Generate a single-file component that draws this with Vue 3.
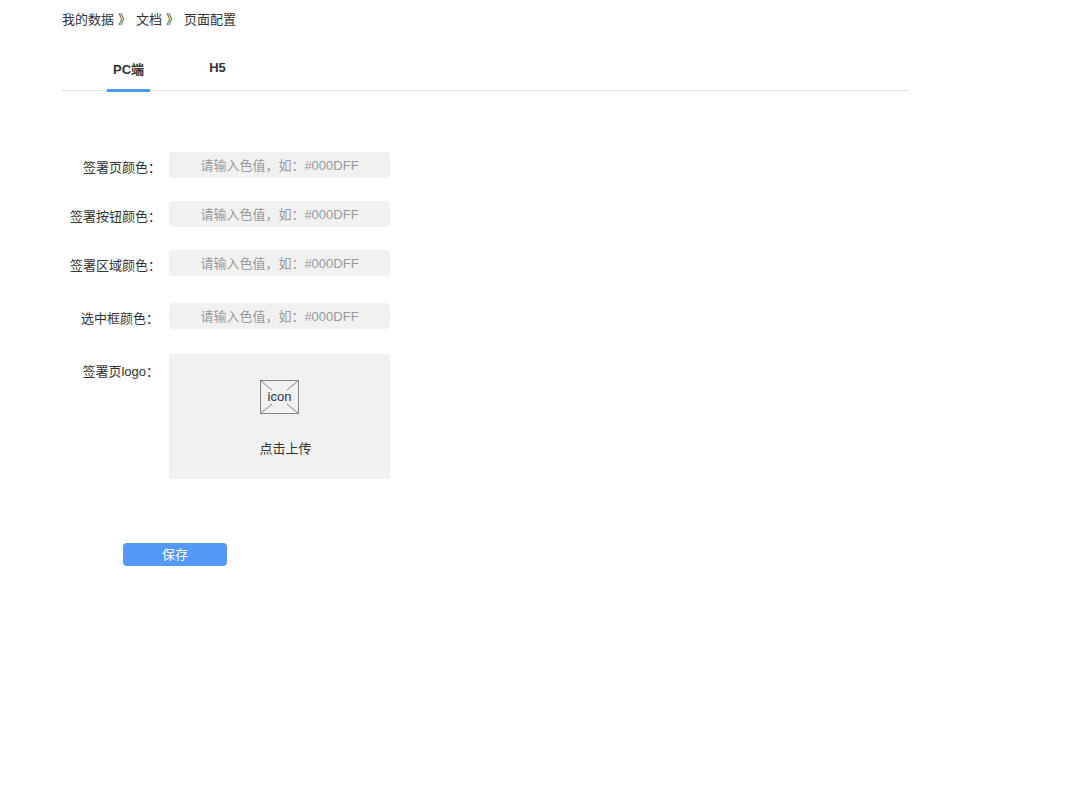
<script setup>
import { ref, reactive } from 'vue'

const tabs = [
  { id: 'pc', text: 'PC端' },
  { id: 'h5', text: 'H5' },
]
const active = ref('pc')

const crumbs = ['我的数据', '文档']
const hint = '请输入色值，如：#000DFF'

const pageFields = [
  { id: 'page-color', text: '签署页颜色：' },
  { id: 'button-color', text: '签署按钮颜色：' },
  { id: 'area-color', text: '签署区域颜色：' },
]
const boxFields = [{ id: 'selected-color', text: '选中框颜色：' }]

const values = reactive({
  'page-color': '',
  'button-color': '',
  'area-color': '',
  'selected-color': '',
})
</script>

<template>
  <div class="page" lang="zh-CN">
    <nav class="crumbs" aria-label="页面路径">
      <template v-for="c in crumbs" :key="c">
        <a href="#">{{ c }}</a>
        <span class="sep">》</span>
      </template>
      <span>页面配置</span>
    </nav>

    <div class="tabs" role="tablist">
      <button
        v-for="t in tabs"
        :key="t.id"
        type="button"
        role="tab"
        class="tab"
        :class="{ active: active === t.id }"
        :aria-selected="active === t.id"
        @click="active = t.id"
      >
        {{ t.text }}
      </button>
    </div>

    <form class="form" @submit.prevent>
      <div class="group">
        <div v-for="f in pageFields" :key="f.id" class="row">
          <label class="name" :for="f.id">{{ f.text }}</label>
          <input :id="f.id" v-model="values[f.id]" class="field" type="text" :placeholder="hint" />
        </div>
      </div>

      <div class="group extra">
        <div v-for="f in boxFields" :key="f.id" class="row">
          <label class="name" :for="f.id">{{ f.text }}</label>
          <input :id="f.id" v-model="values[f.id]" class="field" type="text" :placeholder="hint" />
        </div>
        <div class="row logo">
          <label class="name" for="logo-file">签署页logo：</label>
          <label class="upload">
            <input id="logo-file" class="file" type="file" accept="image/*" />
            <span class="icon">
              <svg width="40" height="34" viewBox="0 0 40 34" fill="none" stroke="#858585" aria-hidden="true">
                <rect x="0.5" y="0.5" width="38" height="33" />
                <path d="M0.5 0.5L12 10M38.5 0.5L27 10M0.5 33.5L12 24M38.5 33.5L27 24" />
              </svg>
              <span class="icon-text">icon</span>
            </span>
            <span class="upload-text">点击上传</span>
          </label>
        </div>
      </div>

      <button class="save" type="submit">保存</button>
    </form>
  </div>
</template>

<style>
body {
  margin: 0;
  background: #fff;
}
</style>

<style scoped>
.page {
  padding: 10px 172px 40px 62px;
  font-family: "Liberation Sans", "Noto Sans CJK SC", sans-serif;
  font-size: 13px;
  line-height: 20px;
  color: #333;
}
.page *,
.page {
  box-sizing: border-box;
}
.crumbs {
  display: flex;
  white-space: nowrap;
}
.crumbs a {
  color: inherit;
  text-decoration: none;
}
.sep {
  margin: 0 5px 0 4px;
}
.tabs {
  display: flex;
  gap: 46px;
  height: 61px;
  padding: 28px 0 0 45px;
  border-bottom: 1px solid #e0e0e0;
}
.tab {
  display: flex;
  justify-content: center;
  min-width: 43px;
  height: 34px;
  padding: 0;
  border: 0;
  background: none;
  font: inherit;
  font-weight: bold;
  color: inherit;
  cursor: pointer;
}
.tab.active {
  padding-top: 2px;
  border-bottom: 3px solid #4b98f0;
}
.form {
  padding-top: 61px;
}
.group {
  display: grid;
  gap: 23px;
}
.extra {
  margin-top: 27px;
  gap: 25px;
}
.row {
  display: flex;
  align-items: flex-start;
  gap: 8px;
}
.name {
  flex: none;
  width: 99px;
  padding-top: 6px;
  text-align: right;
  white-space: nowrap;
}
.extra .row {
  gap: 10px;
}
.extra .name {
  width: 97px;
}
.logo .name {
  padding-top: 8px;
}
.field {
  width: 221px;
  height: 26px;
  padding: 0;
  border: 0;
  border-radius: 4px;
  background: #f1f1f1;
  font: inherit;
  color: #333;
  text-align: center;
  outline: none;
}
.field::placeholder {
  color: #999;
  opacity: 1;
}
.upload {
  position: relative;
  display: flex;
  flex-direction: column;
  align-items: center;
  gap: 25px;
  width: 221px;
  padding: 26px 0 20px;
  border-radius: 1px;
  background: #f1f1f1;
  cursor: pointer;
}
.file {
  position: absolute;
  width: 1px;
  height: 1px;
  opacity: 0;
}
.icon {
  display: grid;
  place-items: center;
}
.icon svg,
.icon-text {
  grid-area: 1 / 1;
}
.upload-text {
  padding-left: 12px;
}
.save {
  display: block;
  width: 104px;
  height: 23px;
  margin: 64px 0 0 61px;
  padding: 0;
  border: 0;
  border-radius: 4px;
  background: #5599f8;
  font: inherit;
  color: #fff;
  cursor: pointer;
}
</style>
